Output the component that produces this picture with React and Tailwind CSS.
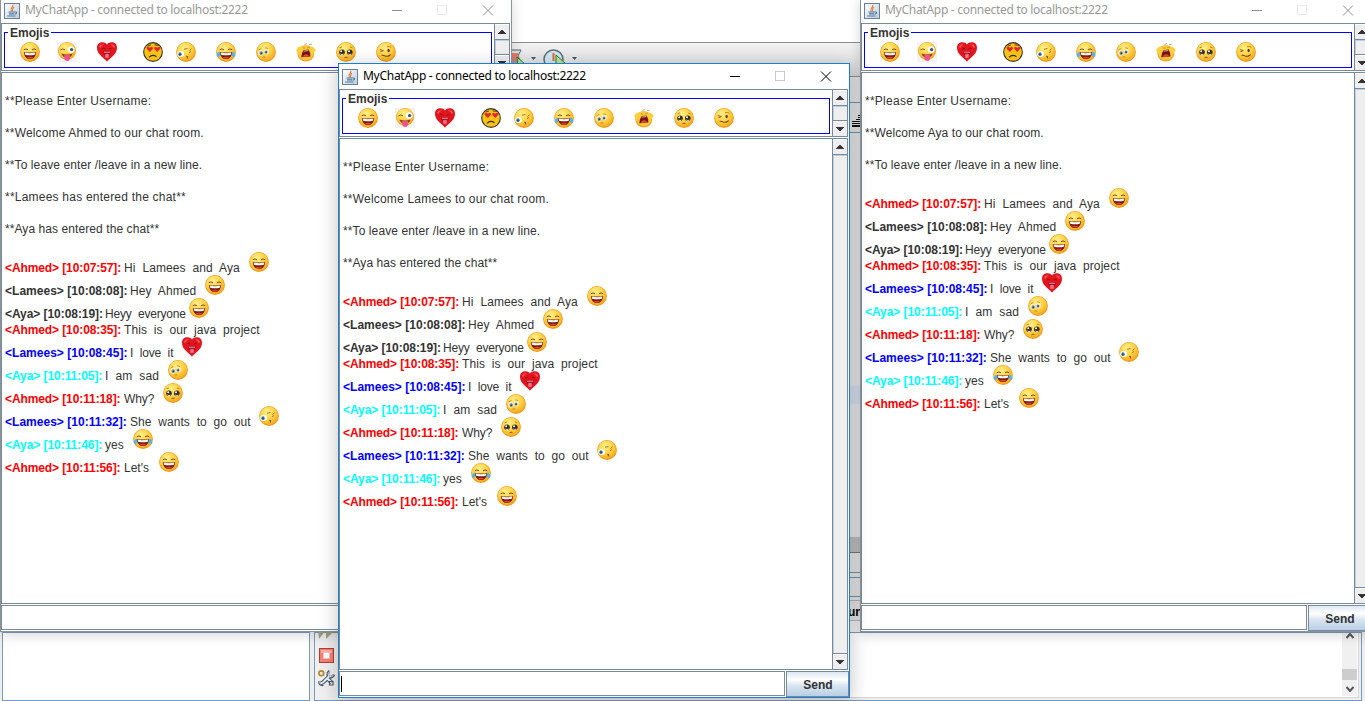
import React from "react";

/* ---------- emoji drawings ---------- */

function Svg({ children }) {
  return (
    <svg className="block h-5 w-5 shrink-0" viewBox="0 0 20 20">
      {children}
    </svg>
  );
}

const Face = () => (
  <>
    <circle cx="10" cy="10" r="9.9" fill="#ec9a1a" />
    <circle cx="10" cy="9.8" r="9.2" fill="url(#face)" />
  </>
);

const Laugh = ({ tears }) => (
  <Svg>
    <Face />
    <path d="M3.800 7.800 Q5.800 6 8 7.800 M12 7.800 Q14.200 6 16.200 7.800" fill="none" stroke="#7b4607" strokeWidth="1" />
    <path d="M3.800 9.900 Q10 11.200 16.200 9.900 Q15.600 17 10 17 Q4.400 17 3.800 9.900 Z" fill="#7a1c10" />
    <path d="M4.600 10.600 Q10 11.700 15.400 10.600 L14.800 12.700 Q10 13.700 5.200 12.700 Z" fill="#fff" />
    <path d="M6.800 15.600 Q10 13.800 13.200 15.600 Q10 17.400 6.800 15.600" fill="#e8402c" />
    {tears && (
      <>
        <path d="M4 9.500 Q0 11 .8 14 Q2.200 16.200 4 14 Z" fill="#4fb7ee" />
        <path d="M16 9.500 Q20 11 19.200 14 Q17.800 16.200 16 14 Z" fill="#4fb7ee" />
      </>
    )}
  </Svg>
);

const Wink = () => (
  <Svg>
    <rect width="20" height="20" fill="#f4f3f4" />
    <circle cx="10" cy="9" r="9" fill="#f0a32a" />
    <circle cx="10" cy="8.800" r="8.400" fill="url(#face)" />
    <path d="M3.500 7.800 Q5.500 6.200 8 7.800" stroke="#80500f" strokeWidth="1" fill="none" />
    <circle cx="14.200" cy="7.600" r="3.400" fill="#fff" />
    <circle cx="14.600" cy="7.600" r="1.700" fill="#456" />
    <path d="M4.500 11.500 Q10 13.500 15.500 11.500 Q15 15.500 10 15.500 Q5.500 15.500 4.500 11.500" fill="#8f4320" />
    <path d="M7.300 13 H13 V16.500 Q12.600 19 10.200 19 Q7.600 18.800 7.300 16.500 Z" fill="#ee4f8d" />
  </Svg>
);

const Heart = () => (
  <Svg>
    <path
      d="M10 19.800 C7.500 16 0 13 0 5.800 C0 2 2.500 .3 5.400 .3 C8 .3 9.500 1.500 10 2.600 C10.500 1.500 12 .3 14.600 .3 C17.500 .3 20 2 20 5.800 C20 13 12.500 16 10 19.800 Z"
      fill="#e2141d"
    />
    <path d="M2 4.500 Q3.500 1.500 7 2.300 Q4.500 3.500 3 6.300 Z M13 2.300 Q16.500 1.500 18 4.500 L17 6.300 Q15.500 3.500 13 2.300 Z" fill="#f8575c" />
    <path d="M5.300 7 Q6.800 5.800 8.300 7 M11.700 7 Q13.200 5.800 14.700 7" stroke="#8e0d18" strokeWidth="1" fill="none" />
    <path d="M6 9.500 H14 Q13.500 13.500 10 14 Q6.500 13.500 6 9.500 Z" fill="#9b1424" />
    <path d="M8.200 12.200 Q10 11.400 11.800 12.200 V15.200 Q10 17.200 8.200 15.200 Z" fill="#ee6f88" />
    <path d="M7 9.800 H13 V10.700 H7 Z" fill="#f4a0a8" />
  </Svg>
);

const HeartSad = () => (
  <Svg>
    <circle cx="10" cy="10" r="9.900" fill="#37302a" />
    <circle cx="10" cy="10" r="8.800" fill="#f9c316" />
    <path d="M7 10 L3.600 6.800 Q3.400 4.600 5.500 4.800 L7 5.700 L8.600 4.800 Q10.300 4.900 9.900 6.800 Z" fill="#e52430" />
    <path d="M14.200 10 L11.200 6.800 Q11 4.600 12.800 4.800 L14.300 5.700 L16 4.800 Q18 4.900 17.300 6.800 Z" fill="#e52430" />
    <path d="M6 15.400 Q9.500 11.800 13.500 14.800" fill="none" stroke="#3b2a14" strokeWidth="1.100" />
    <path d="M11.500 2.800 L16 3.400 M4.500 4 L8 3" stroke="#4a3612" strokeWidth=".9" />
  </Svg>
);

const Glance = () => (
  <Svg>
    <Face />
    <ellipse cx="4.600" cy="12" rx="3.400" ry="3" fill="#fff" />
    <ellipse cx="4" cy="12.200" rx="1.700" ry="1.900" fill="#3f8196" />
    <circle cx="3.900" cy="12.300" r=".8" fill="#173440" />
    <path d="M8 7.200 L11.500 6.600 M13.500 8.600 L15.500 6.800 M13 10.600 L15 9.600" stroke="#a06a10" strokeWidth=".9" fill="none" />
    <path d="M10.300 14.600 Q12 13.600 11.300 16.400" stroke="#8a5208" strokeWidth="1.200" fill="none" />
  </Svg>
);

const Worried = () => (
  <Svg>
    <Face />
    <ellipse cx="4.800" cy="10.800" rx="2.700" ry="2.800" fill="#fff0c4" />
    <ellipse cx="10.300" cy="9.800" rx="2.400" ry="2.700" fill="#fff0c4" />
    <ellipse cx="5.200" cy="11.100" rx="1.700" ry="1.900" fill="#6a8ca6" />
    <ellipse cx="10" cy="10.100" rx="1.500" ry="1.700" fill="#6a8ca6" />
    <circle cx="5.400" cy="11.300" r=".8" fill="#1c3346" />
    <circle cx="10.100" cy="10.300" r=".7" fill="#1c3346" />
    <path d="M2.500 8 L5.500 6.300 M8.800 5.800 L12 6.400" stroke="#c28414" strokeWidth=".8" />
    <path d="M6.500 15.200 Q8 14.500 9.300 15.200" stroke="#bb7a12" strokeWidth=".8" fill="none" />
  </Svg>
);

const Scream = () => (
  <Svg>
    <ellipse cx="9.800" cy="11.400" rx="8.400" ry="8.200" fill="#f3a626" />
    <ellipse cx="9.800" cy="10.800" rx="7.600" ry="7.200" fill="#fcc63a" />
    <path d="M.2 8.500 Q1.500 3.800 6 4.500 L7.500 7.500 Q5 11.500 2 11.500 Z M13 4.500 Q18 3.800 19.800 8.500 L17 11.500 Q13.500 10.500 12.500 7.500 Z" fill="#ffcf3c" />
    <path d="M7.500 8.300 L12.600 7.600 Q14.600 11 14.400 14.600 L5.200 15.200 Q5.500 11 7.500 8.300" fill="#74150f" />
    <path d="M7.500 13.600 Q9.500 11 12.800 13.400 L13 14.600 L7 15 Z" fill="#de463e" />
    <path d="M8 8.700 L12.200 8.200 L12.600 9.100 L7.500 9.600 Z" fill="#f6ead7" />
    <path d="M6.500 5.800 L9.300 6.300 M11 5.300 L14 5.500 M8.500 2.600 L11 1.400 M13 2.600 L16 2.200" stroke="#b98d3a" strokeWidth=".7" />
  </Svg>
);

const Plead = () => (
  <Svg>
    <Face />
    <circle cx="6" cy="10.300" r="2.800" fill="#3a2b1e" />
    <circle cx="13.800" cy="10.300" r="2.800" fill="#3a2b1e" />
    <circle cx="5.200" cy="9.300" r="1" fill="#fff" />
    <circle cx="13" cy="9.300" r="1" fill="#fff" />
    <path d="M4.500 12 Q6 13.300 7.500 12 M12.300 12 Q13.800 13.300 15.300 12" stroke="#d4e6ee" strokeWidth="1" fill="none" />
    <path d="M3.500 5.800 L6 5 M14 5 L16.500 5.800" stroke="#b3720e" strokeWidth=".8" />
    <path d="M8.500 15.600 Q10 14.700 11.500 15.600" stroke="#80450a" strokeWidth=".9" fill="none" />
  </Svg>
);

const Woozy = () => (
  <Svg>
    <Face />
    <path d="M3.800 7.600 L7.400 8.600 L4.400 9.800" stroke="#8a5409" strokeWidth=".9" fill="none" />
    <ellipse cx="12.600" cy="8.500" rx="1.100" ry="1.700" fill="#5a3108" />
    <path d="M11 4.800 Q13.500 4 15.300 5.200" stroke="#b0740f" strokeWidth=".8" fill="none" />
    <path d="M5.500 13.300 Q7.500 13 9 13.900 Q11.500 14.900 13.300 13.500 L14.800 12.600" stroke="#7a440b" strokeWidth="1.100" fill="none" />
  </Svg>
);

const EMOJI = {
  laugh: <Laugh />,
  tears: <Laugh tears />,
  wink: <Wink />,
  heart: <Heart />,
  heartSad: <HeartSad />,
  glance: <Glance />,
  worried: <Worried />,
  scream: <Scream />,
  plead: <Plead />,
  woozy: <Woozy />,
};

/* ---------- window chrome ---------- */

const JavaIcon = () => (
  <svg className="block h-4 w-4 shrink-0" viewBox="0 0 16 16">
    <rect x=".5" y=".5" width="15" height="15" fill="url(#tile)" stroke="#6b7f92" />
    <path d="M8.800 1.800 C10 3.800 5.600 5 7.200 8.400 M10 4.300 C7.600 5.500 9.400 6.600 8.200 8.400" stroke="#e8792a" strokeWidth="1.100" fill="none" />
    <path d="M4.500 9 H10.500 M5 10.900 H10 M3.200 13 H11.500 M10.500 9 Q13.500 8.600 12.300 10.500 L10.500 11.300" stroke="#4c78a4" strokeWidth="1.100" fill="none" />
  </svg>
);

const TitleBar = ({ active }) => (
  <div className="flex h-[25px] shrink-0 items-center pl-[3px] pr-[17px]">
    <JavaIcon />
    <span
      className={
        "mb-px ml-[5px] grow whitespace-pre font-['Noto_Sans','Open_Sans',sans-serif] text-[12px] leading-[16px] tracking-[-0.28px] " +
        (active ? "text-black" : "text-[#999999]")
      }
    >
      MyChatApp - connected to localhost:2222
    </span>
    <svg
      className={"mb-px block h-[11px] w-[102px] shrink-0 " + (active ? "text-black" : "text-[#8f8f8f]")}
      viewBox="0 0 102 11"
      fill="none"
      stroke="currentColor"
    >
      <path d="M0 5.500 H10" />
      <rect x="45.500" y=".5" width="9" height="9" stroke={active ? "#cccccc" : "#e8e8e8"} />
      <path d="M91 .5 L101 10.500 M101 .5 L91 10.500" />
    </svg>
  </div>
);

const ScrollButton = ({ down }) => (
  <div className="flex h-[15px] shrink-0 items-center justify-center border-t border-white bg-[#eeeeee] pr-px">
    <svg className="block h-1 w-2" viewBox="0 0 8 4" shapeRendering="crispEdges">
      <path
        d={down ? "M0 0H8V1H7V2H6V3H5V4H3V3H2V2H1V1H0Z" : "M3 0H5V1H6V2H7V3H8V4H0V3H1V2H2V1H3Z"}
        fill="#333333"
      />
    </svg>
  </div>
);

const ScrollBar = () => (
  <div className="flex w-[16px] shrink-0 flex-col border-x border-[#7a8a99]">
    <ScrollButton />
    <div className="grow border-y border-[#7a8a99] bg-[#eeeeee]">
      <div className="h-full border-l border-t border-[#b8cfe5]" />
    </div>
    <ScrollButton down />
  </div>
);

const TOOLBAR = [
  ["laugh", "ml-[15px]"],
  ["wink", "ml-[17px]"],
  ["heart", "ml-[20px]"],
  ["heartSad", "ml-[26px]"],
  ["glance", "ml-[13px]"],
  ["tears", "ml-[20px]"],
  ["worried", "ml-[20px]"],
  ["scream", "ml-[20px]"],
  ["plead", "ml-[20px]"],
  ["woozy", "ml-[20px]"],
];

const EmojiPane = () => (
  <div className="mr-px flex h-[48px] shrink-0 border-y border-l border-[#7a8a99]">
    <div className="grow pl-[2px] pt-[8px]">
      <div className="relative flex h-[36px] w-[488px] border border-[#0000ff] pt-[9px]">
        <span className="absolute left-[3px] top-[-8px] bg-white px-[2px] text-[12px] font-bold leading-[16px] text-[#333333]">
          Emojis
        </span>
        {TOOLBAR.map(([name, gap]) => (
          <div key={name} className={gap}>
            {EMOJI[name]}
          </div>
        ))}
      </div>
    </div>
    <ScrollBar />
  </div>
);

/* ---------- conversation ---------- */

const RED = "text-[#ff0000]";
const DARK = "text-[#333333]";
const BLUE = "text-[#0000ff]";
const CYAN = "text-[#00ffff]";
const AHMED = "w-[119px] tracking-[-0.1px]";
const LAMEES = "w-[125px] tracking-[0.02px]";
const AYA = "w-[100px] tracking-[-0.06px]";

const MESSAGES = [
  ["<Ahmed> [10:07:57]:", RED, AHMED, "Hi  Lamees  and  Aya", "w-[125px] tracking-[0.1px]", "laugh"],
  ["<Lamees> [10:08:08]:", DARK, LAMEES, "Hey  Ahmed", "w-[75px] tracking-[0.1px]", "laugh"],
  ["<Aya> [10:08:19]:", DARK, AYA, "Heyy  everyone", "w-[84px] tracking-[-0.18px]", "laugh"],
  ["<Ahmed> [10:08:35]:", RED, AHMED, "This  is  our  java  project", "w-[140px] tracking-[0.08px]", null],
  ["<Lamees> [10:08:45]:", BLUE, LAMEES, "I  love  it", "w-[52px] tracking-[-0.12px]", "heart"],
  ["<Aya> [10:11:05]:", CYAN, AYA, "I  am  sad", "w-[63px] tracking-[0.14px]", "worried"],
  ["<Ahmed> [10:11:18]:", RED, AHMED, "Why?", "w-[39px] tracking-[-0.1px]", "plead"],
  ["<Lamees> [10:11:32]:", BLUE, LAMEES, "She  wants  to  go  out", "w-[129px] tracking-[0.05px]", "glance"],
  ["<Aya> [10:11:46]:", CYAN, AYA, "yes", "w-[28px]", "tears"],
  ["<Ahmed> [10:11:56]:", RED, AHMED, "Let's", "w-[35px]", "laugh"],
];

const Conversation = ({ notices }) => (
  <div className="grow whitespace-pre pl-[3px] pt-[4px] text-[12px] leading-[16px] text-[#333333]">
    {notices.map(([line, tracking]) => (
      <div key={line} className={"pt-4 " + tracking}>
        {line}
      </div>
    ))}
    <div className="h-4" />
    {MESSAGES.map(([who, color, whoStyle, text, textStyle, emoji]) => (
      <div key={who} className={"flex items-end " + (emoji ? "h-[23px]" : "h-4")}>
        <span className={"shrink-0 font-bold " + color + " " + whoStyle}>{who}</span>
        <span className={"shrink-0 " + textStyle}>{text}</span>
        {emoji && <div className="mb-[4px]">{EMOJI[emoji]}</div>}
      </div>
    ))}
  </div>
);

const ChatWindow = ({ active, place, notices, caret }) => (
  <div
    className={
      "absolute flex h-[635px] w-[512px] flex-col border bg-white " +
      (active
        ? "border-[#1a7fd0] shadow-[0_4px_18px_1px_rgba(0,0,0,0.22)] "
        : "border-[#8c9299] shadow-[0_3px_12px_0_rgba(0,0,0,0.16)] ") +
      place
    }
  >
    <TitleBar active={active} />
    <EmojiPane />
    <div className="mr-px mt-px flex h-[532px] shrink-0 border-y border-l border-[#7a8a99]">
      <Conversation notices={notices} />
      <ScrollBar />
    </div>
    <div className="mt-px flex h-[26px] shrink-0 gap-px">
      <div className="flex h-[25px] w-[446px] items-center border border-[#7a8a99] pl-[1px]">
        {caret && <div className="h-4 w-px bg-black" />}
      </div>
      <div className="flex grow items-center justify-center border border-[#7a8a99] bg-[linear-gradient(180deg,#dde8f3_0%,#ffffff_32%,#dbe6f1_55%,#b8cfe5_100%)] pl-px pt-[2px] text-[12px] font-bold text-[#333333]">
        Send
      </div>
    </div>
  </div>
);

/* ---------- IDE behind the windows ---------- */

const IdeToolbar = () => (
  <div className="flex h-[35px] shrink-0 items-start border-y border-[#8e8e8e] bg-[linear-gradient(180deg,#f2f2f2,#d8d8d8)] pl-[510px] pt-[5px]">
    <svg className="block h-6 w-[70px]" viewBox="0 0 70 24">
      <path d="M1 2 H11 L8 8 L11 14 H1 Z" fill="#dde3e8" stroke="#5a6672" />
      <path d="M1 5 H8 V13 H1 Z" fill="#e88070" />
      <path d="M7 9 L16 17 L8 20 Z" fill="#b9e59a" stroke="#2c7a18" />
      <path d="M21 9 H26 L23.500 12 Z M62 9 H67 L64.500 12 Z" fill="#4a525a" />
      <circle cx="43.500" cy="11.500" r="9.500" fill="#d3e6f3" stroke="#5d6f7e" strokeWidth="1.500" />
      <path d="M43.500 5 V13" stroke="#d9712c" strokeWidth="2" />
      <path d="M46 7 L55 15 L46 20 Z" fill="#b9e59a" stroke="#2c7a18" />
    </svg>
  </div>
);

const Ide = () => (
  <div className="flex h-[701px] w-[1365px] flex-col bg-[#eeeeee]">
    <div className="h-[42px] shrink-0 bg-white" />
    <IdeToolbar />
    <div className="flex h-[555px] shrink-0 flex-col bg-[#e4e4e4] pl-[850px]">
      <div className="h-[26px] border-b border-[#6f93b3]" />
      <div className="flex h-[30px] items-end border-b border-[#6f93b3] pb-[5px] pl-[2px]">
        <svg className="block h-3 w-2" viewBox="0 0 8 12" shapeRendering="crispEdges">
          <path d="M6 0H8V1H6Z M6 2H8V3H6Z M4 4H8V5H4Z M0 6H8V7H0Z M0 8H8V9H0Z M0 10H8V12H0Z" fill="#111" />
        </svg>
      </div>
      <div className="h-[253px]" />
      <div className="h-[18px] bg-[#d3dcec]" />
      <div className="h-[133px]" />
      <div className="h-[16px] border-b border-[#777777] bg-[#bcbcbc]" />
      <div className="h-[20px] border-b border-[#6f93b3]" />
      <div className="h-[5px] border-b border-[#6f93b3]" />
      <div className="h-[19px] border-b border-[#6f93b3]" />
      <div className="mt-[3px] h-[21px] border-y border-[#b5b5b5] pt-[4px] text-[12px] font-bold leading-[14px] text-black">
        <span className="-ml-[2px]">un</span>
      </div>
      <div className="grow bg-[#eeeeee]" />
    </div>
    <div className="flex h-[69px] shrink-0 gap-1 pl-[2px] pr-[3px]">
      <div className="w-[308px] border border-[#7a9abb] bg-white" />
      <div className="flex grow border border-[#7a9abb]">
        <div className="flex w-[24px] flex-col items-center gap-[7px] bg-[#f0f0f0] pr-px">
          <svg className="mt-[-3px] block h-[10px] w-[17px]" viewBox="0 0 17 10">
            <path d="M0 0 H8 L1 9 Z M8 0 H17 L8 9 Z" fill="#a3a585" />
          </svg>
          <svg className="mt-px block h-[15px] w-[15px]" viewBox="0 0 15 15">
            <rect x=".5" y=".5" width="14" height="14" fill="#f47f76" stroke="#b33c36" />
            <rect x="2" y="2" width="11" height="3" fill="#f9b0a8" />
            <rect x="4.500" y="4.500" width="6" height="6" fill="#fff" stroke="#f8c4be" />
          </svg>
          <svg className="block h-[17px] w-[17px]" viewBox="0 0 17 17" fill="none">
            <path d="M2.500 13.500 Q5 13 7 10.500 L11 6.500 M9.500 8.500 L13.500 12.500" stroke="#46596e" strokeWidth="4" />
            <path d="M11.500 1 Q8.500 3.500 10.500 6.500 Q14 8.500 16 4.500" stroke="#46596e" strokeWidth="2.600" />
            <path d="M2.500 13.500 Q5 13 7 10.500 L11 6.500 M9.500 8.500 L13.500 12.500" stroke="#eef3f7" strokeWidth="2" />
            <path d="M11.500 1.500 Q9 3.500 10.500 6 Q13.500 8 15.700 5" stroke="#eef3f7" strokeWidth="1" />
            <path d="M1 11 Q0 16 5.500 15.500 M11.500 11.500 H15 V15 H11.500 Z" stroke="#46596e" strokeWidth="1.200" />
            <circle cx="3.300" cy="3.300" r="2.400" stroke="#b8892b" strokeWidth="1.700" />
          </svg>
        </div>
        <div className="mb-[2px] mr-[2px] flex grow border-b border-r border-[#d5d5d5] bg-white pb-px pr-px">
          <div className="grow" />
          <div className="flex w-[15px] flex-col items-center bg-[#f0f0f0]">
            <svg className="mb-auto block h-[6px] w-2" viewBox="0 0 8 6">
              <path d="M.5 5 L4 1 L7.500 5" fill="none" stroke="#555" strokeWidth="2" />
            </svg>
            <div className="h-[11px] w-[15px] bg-[#cdcdcd]" />
            <svg className="mb-[4px] mt-[6px] block h-[6px] w-2" viewBox="0 0 8 6">
              <path d="M.5 1 L4 5 L7.500 1" fill="none" stroke="#555" strokeWidth="2" />
            </svg>
          </div>
        </div>
      </div>
    </div>
  </div>
);

const ENTER = ["**Please Enter Username:", "tracking-[0.26px]"];
const LEAVE = ["**To leave enter /leave in a new line.", "tracking-[0.1px]"];
const AYA_IN = ["**Aya has entered the chat**", "tracking-[0.08px]"];

export default function App() {
  return (
    <div className="relative h-[701px] w-[1365px] overflow-hidden font-['Liberation_Sans',Arial,sans-serif]">
      <svg className="absolute h-0 w-0">
        <defs>
          <radialGradient id="face" cx=".4" cy=".3" r=".75">
            <stop offset="0" stopColor="#fff08a" />
            <stop offset=".55" stopColor="#fdd044" />
            <stop offset="1" stopColor="#f2a21c" />
          </radialGradient>
          <linearGradient id="tile" x1="0" y1="0" x2="1" y2="1">
            <stop offset="0" stopColor="#ffffff" />
            <stop offset="1" stopColor="#bccddc" />
          </linearGradient>
        </defs>
      </svg>
      <Ide />
      <ChatWindow
        place="left-0 top-[-3px]"
        notices={[
          ENTER,
          ["**Welcome Ahmed to our chat room.", "tracking-[0.15px]"],
          LEAVE,
          ["**Lamees has entered the chat**", "tracking-[0.22px]"],
          AYA_IN,
        ]}
      />
      <ChatWindow
        place="left-[860px] top-[-3px]"
        notices={[ENTER, ["**Welcome Aya to our chat room.", "tracking-[0.08px]"], LEAVE]}
      />
      <ChatWindow
        active
        caret
        place="left-[338px] top-[63px]"
        notices={[ENTER, ["**Welcome Lamees to our chat room.", "tracking-[0.2px]"], LEAVE, AYA_IN]}
      />
    </div>
  );
}
